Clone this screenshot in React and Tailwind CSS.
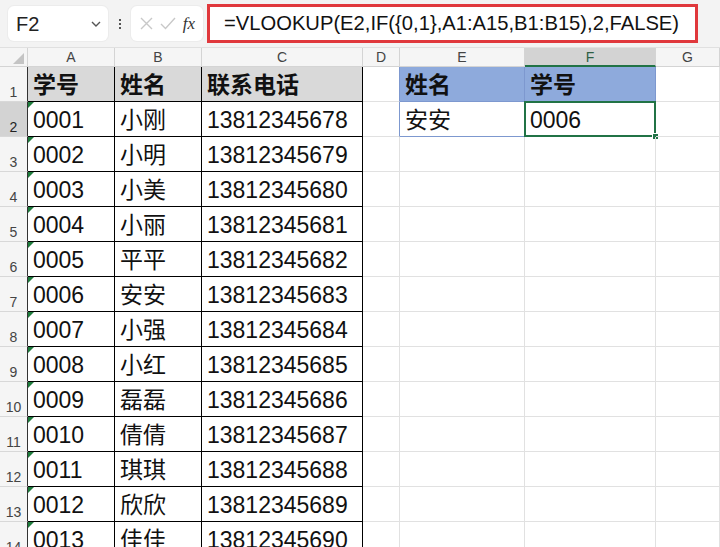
const cellFont = { fontFamily: "'Liberation Sans','Noto Sans CJK SC',sans-serif" };

const rows = [
  ['0001', '小刚', '13812345678'],
  ['0002', '小明', '13812345679'],
  ['0003', '小美', '13812345680'],
  ['0004', '小丽', '13812345681'],
  ['0005', '平平', '13812345682'],
  ['0006', '安安', '13812345683'],
  ['0007', '小强', '13812345684'],
  ['0008', '小红', '13812345685'],
  ['0009', '磊磊', '13812345686'],
  ['0010', '倩倩', '13812345687'],
  ['0011', '琪琪', '13812345688'],
  ['0012', '欣欣', '13812345689'],
  ['0013', '佳佳', '13812345690'],
];

const cols = ['A', 'B', 'C', 'D', 'E', 'F', 'G'];

function Cell({ className = '', children, triangle }) {
  return (
    <div
      className={`relative flex h-[35px] items-center overflow-visible whitespace-nowrap border-b border-r pl-[5px] pt-[3px] text-[23px] text-[#111] ${className}`}
    >
      {triangle && (
        <span className="absolute left-0 top-0 h-0 w-0 border-r-[6px] border-t-[6px] border-r-transparent border-t-[#1e7b3c]" />
      )}
      {children}
    </div>
  );
}

function RowHead({ n, selected }) {
  return (
    <div
      className={`flex h-[35px] items-end justify-center border-b border-r border-b-[#d8d8d8] border-r-[#333] pb-[2px] text-[14px] leading-none ${
        selected ? 'bg-[#d3d3d3] text-[#222]' : 'bg-[#f5f5f5] text-[#444]'
      }`}
      style={{ fontFamily: "'Liberation Sans',sans-serif" }}
    >
      {n}
    </div>
  );
}

export default function App() {
  return (
    <div className="h-[547px] w-[720px] overflow-hidden bg-white" style={cellFont}>
      {/* formula bar */}
      <div className="flex h-[48px] items-center gap-[4px] border-b border-[#e0e0e0] bg-[#f3f3f3] pl-[8px]">
        <div className="flex h-[35px] w-[100px] items-center justify-between rounded-md bg-white pl-[8px] pr-[6px] shadow-[0_0_0_1px_#ececec]">
          <span className="text-[20px] text-[#222]" style={{ fontFamily: "'Liberation Sans',sans-serif" }}>F2</span>
          <svg width="12" height="8" viewBox="0 0 12 8" fill="none" stroke="#555" strokeWidth="1.4">
            <path d="M2 2l4 4 4-4" />
          </svg>
        </div>
        <div className="flex w-[15px] flex-col items-center gap-[2px]">
          <span className="h-[2px] w-[2px] bg-[#555]" />
          <span className="h-[2px] w-[2px] bg-[#555]" />
          <span className="h-[2px] w-[2px] bg-[#555]" />
        </div>
        <div className="flex h-[35px] w-[72px] items-center justify-between rounded-md bg-white px-[8px] shadow-[0_0_0_1px_#ececec]">
          <svg width="15" height="15" viewBox="0 0 15 15" stroke="#c8c8c8" strokeWidth="1.4">
            <path d="M2 2l11 11M13 2L2 13" />
          </svg>
          <svg width="16" height="13" viewBox="0 0 16 13" fill="none" stroke="#c8c8c8" strokeWidth="1.4">
            <path d="M1 7l4.5 4.5L15 1" />
          </svg>
          <span className="text-[17px] italic text-[#333]" style={{ fontFamily: "'Liberation Serif',serif" }}>
            fx
          </span>
        </div>
        <div className="flex h-[39px] w-[491px] items-center border-[3px] border-[#e0383c] bg-white pl-[14px]">
          <span className="text-[20.2px] text-[#111]" style={{ fontFamily: "'Liberation Sans',sans-serif" }}>
            =VLOOKUP(E2,IF({'{'}0,1{'}'},A1:A15,B1:B15),2,FALSE)
          </span>
        </div>
      </div>

      <div className="grid grid-cols-[28px_87px_87px_161px_37px_125px_131px_1fr]">
        {/* column headers */}
        <div className="relative h-[19px] border-b border-r border-[#d4d4d4] bg-[#f5f5f5]">
          <span className="absolute bottom-[2px] right-[3px] h-0 w-0 border-b-[11px] border-l-[11px] border-b-[#c4c4c4] border-l-transparent" />
        </div>
        {cols.map((c) => (
          <div
            key={c}
            className={`flex h-[19px] items-center justify-center border-r text-[14px] leading-none ${
              c === 'F'
                ? 'border-b-2 border-b-[#217346] border-r-[#d4d4d4] bg-[#d3d3d3] text-[#2f5f45]'
                : 'border-b border-[#d4d4d4] bg-[#f5f5f5] text-[#444]'
            }`}
            style={{ fontFamily: "'Liberation Sans',sans-serif" }}
          >
            {c}
          </div>
        ))}

        {/* row 1 */}
        <RowHead n={1} />
        <Cell className="border-black bg-[#d9d9d9] font-bold">学号</Cell>
        <Cell className="border-black bg-[#d9d9d9] font-bold">姓名</Cell>
        <Cell className="border-black bg-[#d9d9d9] font-bold">联系电话</Cell>
        <Cell className="border-b-[#e1e1e1] border-r-[#7d98cf]" />
        <Cell className="border-b-[#7d98cf] border-r-[#7d98cf] bg-[#8eaadc] font-bold">姓名</Cell>
        <Cell className="border-b-[#217346] border-r-[#7d98cf] bg-[#8eaadc] font-bold">学号</Cell>
        <Cell className="border-[#e1e1e1]" />

        {rows.map((r, i) => {
          const n = i + 2;
          return [
            <RowHead key={`h${n}`} n={n} selected={n === 2} />,
            <Cell key={`a${n}`} className="border-black" triangle>
              {r[0]}
            </Cell>,
            <Cell key={`b${n}`} className="border-black">
              {r[1]}
            </Cell>,
            <Cell key={`c${n}`} className="border-black">
              {r[2]}
            </Cell>,
            <Cell key={`d${n}`} className={n === 2 ? 'border-b-[#e1e1e1] border-r-[#7d98cf]' : 'border-[#e1e1e1]'} />,
            n === 2 ? (
              <Cell key={`e${n}`} className="border-b-[#7d98cf] border-r-[#217346]">
                安安
              </Cell>
            ) : (
              <Cell key={`e${n}`} className="border-[#e1e1e1]" />
            ),
            n === 2 ? (
              <Cell key={`f${n}`} className="border-[#e1e1e1]">
                <span className="pointer-events-none absolute -left-[1px] -top-[1px] h-[36px] w-[132px] border-2 border-[#217346]" />
                <span className="absolute -bottom-[4px] -right-[4px] h-[7px] w-[7px] border border-white bg-[#217346]" />
                0006
              </Cell>
            ) : (
              <Cell key={`f${n}`} className="border-[#e1e1e1]" />
            ),
            <Cell key={`g${n}`} className="border-[#e1e1e1]" />,
          ];
        })}
      </div>
    </div>
  );
}
